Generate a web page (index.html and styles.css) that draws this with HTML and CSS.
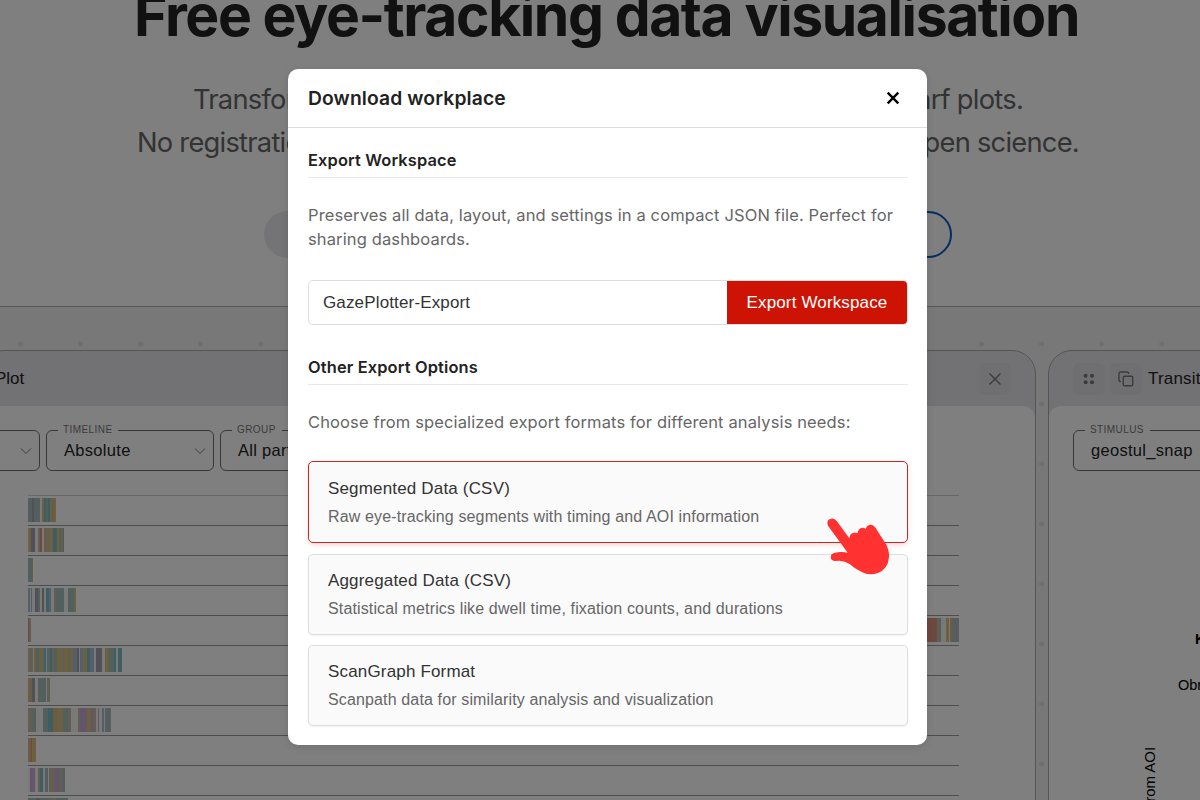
FILE: index.html
```
<!DOCTYPE html>
<html lang="en">
<head>
<meta charset="utf-8">
<title>GazePlotter</title>
<link rel="stylesheet" href="styles.css">
</head>
<body>
<div class="page">
  <header class="hero">
    <h1 class="hero-title">Free eye-tracking data visualisation</h1>
    <div class="hero-line hero-line-first"><span>Transform</span><span>scarf plots.</span></div>
    <div class="hero-line"><span>No registration</span><span>open science.</span></div>
    <div class="hero-actions"><span class="pill"></span><span class="pill pill-outline"></span></div>
  </header>
  <main class="board">
    <section class="panel panel-scarf">
      <div class="panel-head">
        <span class="panel-title">Plot</span>
        <span class="tool"><svg width="14" height="14" viewBox="0 0 14 14"><path d="M1.5 1.5l11 11M12.5 1.5l-11 11"/></svg></span>
      </div>
      <div class="panel-body">
        <div class="selects">
          <fieldset class="select select-cut"><legend class="cap cap-none"></legend><span></span><svg class="chev" width="12" height="8" viewBox="0 0 12 8"><path d="M1 1.5l5 5 5-5"/></svg></fieldset>
          <fieldset class="select"><legend class="cap">TIMELINE</legend><span>Absolute</span><svg class="chev" width="12" height="8" viewBox="0 0 12 8"><path d="M1 1.5l5 5 5-5"/></svg></fieldset>
          <fieldset class="select"><legend class="cap">GROUP</legend><span>All participants</span></fieldset>
        </div>
        <div class="rows" id="rows"></div>
      </div>
    </section>
    <section class="panel panel-matrix">
      <div class="panel-head">
        <span class="tool"><svg width="14" height="14" viewBox="0 0 14 14"><g class="solid"><circle cx="3.6" cy="3.8" r="2"/><circle cx="10" cy="3.8" r="2"/><circle cx="3.6" cy="10.2" r="2"/><circle cx="10" cy="10.2" r="2"/></g></svg></span>
        <span class="tool"><svg width="16" height="16" viewBox="0 0 16 16"><rect x="5.2" y="5.2" width="9.6" height="9.6" rx="1.6"/><path d="M3 10.6H2.4A1.4 1.4 0 0 1 1 9.2V2.6A1.6 1.6 0 0 1 2.6 1h6.6a1.4 1.4 0 0 1 1.4 1.4V3"/></svg></span>
        <span class="panel-title">Transition Matrix</span>
      </div>
      <div class="panel-body">
        <div class="selects"><fieldset class="select select-wide"><legend class="cap">STIMULUS</legend><span>geostul_snap</span></fieldset></div>
        <div class="matrix">
          <span class="axis">From AOI</span>
          <div class="labels"><b>K</b><span>Obr</span></div>
        </div>
      </div>
    </section>
  </main>
</div>
<div class="overlay">
  <div class="modal">
    <div class="modal-head">
      <h2 class="modal-title">Download workplace</h2>
      <svg class="close" width="14" height="14" viewBox="0 0 14 14"><path d="M1.7 1.7l10.6 10.6M12.3 1.7L1.7 12.3"/></svg>
    </div>
    <div class="modal-body">
      <h3 class="section-title">Export Workspace</h3>
      <p class="note">Preserves all data, layout, and settings in a compact JSON file. Perfect for<br>sharing dashboards.</p>
      <div class="export">
        <div class="field">GazePlotter-Export</div>
        <div class="button">Export Workspace</div>
      </div>
      <h3 class="section-title">Other Export Options</h3>
      <p class="note note-short">Choose from specialized export formats for different analysis needs:</p>
      <div class="options">
        <div class="option option-active"><div class="name">Segmented Data (CSV)</div><div class="desc">Raw eye-tracking segments with timing and AOI information</div></div>
        <div class="option"><div class="name">Aggregated Data (CSV)</div><div class="desc">Statistical metrics like dwell time, fixation counts, and durations</div></div>
        <div class="option"><div class="name">ScanGraph Format</div><div class="desc">Scanpath data for similarity analysis and visualization</div></div>
      </div>
    </div>
    <svg class="hand" width="65" height="59" viewBox="78 232 195 177"><path d="M84 258Q78 243 90 238Q102 233 110 244L148 296Q150 280 162 279Q170 278 173 281Q174 268 184 265Q192 263 197 268Q200 256 211 255Q221 255 227 265L258 314Q268 332 267 352Q264 390 232 401Q210 408 190 399Q165 388 150 374Q135 364 118 363L104 364Q92 362 92 352Q93 342 104 339L120 337Q130 336 143 339Z"/></svg>
  </div>
</div>
<script src="rows.js"></script>
</body>
</html>
```

FILE: styles.css
```
* { box-sizing: border-box; }
body { margin: 0; width: 1200px; height: 800px; overflow: hidden; position: relative; background: #fff; font-family: "Liberation Sans", Arial, sans-serif; }
h1, h2, h3, p { margin: 0; }
svg { display: block; flex: none; fill: none; }

.page { height: 800px; overflow: hidden; display: flex; flex-direction: column; }
.hero { height: 306px; flex: none; font-family: Inter, sans-serif; }
.hero-title { margin-top: -20px; padding-left: 134px; height: 75px; line-height: 72px; font-size: 57px; font-weight: 700; letter-spacing: -1.4px; color: #222; white-space: nowrap; }
.hero-line { display: flex; justify-content: space-between; margin: 0 121px 0 137px; line-height: 43px; font-size: 27.3px; letter-spacing: -0.75px; color: #666; }
.hero-line-first { margin: 23px 177px 0 193px; }
.hero-actions { display: flex; justify-content: space-between; margin: 47px 248px 0 264px; }
.pill { width: 180px; height: 47px; border-radius: 24px; background: #e9e9ee; }
.pill-outline { background: #fff; border: 2px solid #0a5ac8; }

.board { flex: 1; display: flex; gap: 12px; padding-top: 43px; background: #f1f1f1 radial-gradient(circle, #dcdcdc 2px, transparent 3px) -9.7px 7px / 60.08px 60px; border-top: 1px solid #b0b0b0; }
.panel { display: flex; flex-direction: column; height: 520px; border: 1px solid #aaa; border-radius: 24px; background: #e4e4e8; overflow: hidden; flex: none; }
.panel-scarf { width: 1056px; margin-left: -20px; }
.panel-matrix { width: 420px; }
.panel-head { display: flex; align-items: center; height: 55px; flex: none; padding-left: 24px; gap: 5px; }
.panel-scarf .panel-head { justify-content: space-between; padding: 0 24px 0 14px; }
.panel-title { font-size: 17px; color: #222; white-space: nowrap; }
.panel-matrix .panel-title { margin-left: 1px; letter-spacing: 0.2px; }
.tool { display: flex; align-items: center; justify-content: center; width: 32px; height: 32px; border-radius: 6px; background: #dfdfe3; stroke: #777; stroke-width: 1.4; }
.solid { fill: #777; stroke: none; }
.panel-body { flex: 1; border-radius: 12px 12px 0 0; background: #fff; padding-top: 19px; }

.selects { display: flex; gap: 6px; margin-left: 7px; }
.panel-matrix .selects { margin-left: 24px; }
.select { display: flex; align-items: center; justify-content: space-between; margin: 0; width: 168px; height: 46px; min-width: 0; padding: 0 7px 4px 17px; border: 1px solid #707070; border-radius: 6px; font-size: 16.5px; letter-spacing: 0.3px; color: #222; white-space: nowrap; }
.select-cut { width: 52px; }
.select-wide { width: 300px; }
.cap { height: 10px; line-height: 10px; padding: 0 6px 0 5px; margin-left: -6px; font-size: 10px; letter-spacing: 0.42px; color: #777; }
.cap-none { padding: 0; }
.chev { stroke: #777; }

.rows { display: flex; flex-direction: column; width: 931px; margin: 24px 0 0 47px; }
.row { height: 30px; flex: none; border-top: 1px solid #9a9a9a; padding-top: 2px; display: flex; }
.row:first-child { border-color: #d0d0d0; }
.bars { display: flex; height: 24px; opacity: 0.72; }
.bars i { display: block; }
.bars-end { margin-left: auto; }

.matrix { display: flex; align-items: flex-start; gap: 20px; margin-left: 92px; color: #000; }
.axis { writing-mode: vertical-rl; transform: rotate(180deg); margin-top: 276px; height: 64px; font-size: 15px; white-space: nowrap; }
.labels { display: flex; flex-direction: column; padding-top: 158px; font-size: 14.5px; line-height: 20px; gap: 26px; }
.labels b { padding-left: 17px; }

.overlay { position: absolute; inset: 0; background: rgba(0, 0, 0, 0.5); padding: 69px 0 0 288.4px; }
.modal { position: relative; width: 639px; height: 676px; border-radius: 10px; background: #fff; box-shadow: 0 2px 8px rgba(0, 0, 0, 0.12); font-family: Inter, sans-serif; }
.modal-head { display: flex; align-items: center; justify-content: space-between; height: 59px; padding: 0 27px 0 19.6px; border-bottom: 1px solid #ddd; }
.modal-title { font-size: 19.3px; font-weight: 600; letter-spacing: 0.12px; color: #222; }
.close { stroke: #000; stroke-width: 2.4; }
.modal-body { padding: 20px 19.4px 0 19.6px; }
.section-title { height: 30px; line-height: 25px; border-bottom: 1px solid #e8e8e8; font-size: 16.4px; font-weight: 600; letter-spacing: 0.15px; color: #222; }
.note { margin-top: 25px; height: 49px; line-height: 24px; font-size: 16.5px; letter-spacing: 0.13px; color: #666; white-space: nowrap; }
.export { display: flex; height: 45px; margin: 28px 0 30px; border: 1px solid #ddd; border-radius: 5px; font-family: "Liberation Sans", Arial, sans-serif; font-size: 17px; letter-spacing: 0.15px; line-height: 43px; white-space: nowrap; }
.field { flex: 1; padding-left: 14px; color: #333; }
.button { width: 180px; text-align: center; border-radius: 0 4px 4px 0; background: #cd1404; color: #fff; }
.note-short { height: 24px; }
.options { display: flex; flex-direction: column; gap: 10px; margin-top: 27px; font-family: "Liberation Sans", Arial, sans-serif; white-space: nowrap; }
.option { height: 81px; padding: 13px 0 0 19px; border: 1px solid #ddd; border-radius: 5px; background: #fafafa; box-shadow: 0 1px 2px rgba(0, 0, 0, 0.06); }
.option-active { height: 82px; margin-bottom: 1px; padding-top: 14px; border-color: #c62828; box-shadow: 0 2px 5px rgba(200, 20, 4, 0.16); }
.name { font-size: 17px; line-height: 26px; letter-spacing: 0.17px; color: #333; }
.desc { margin-top: 2px; font-size: 16px; line-height: 26px; letter-spacing: 0.14px; color: #666; }
.hand { position: absolute; left: 537.6px; top: 448.3px; fill: #ff3131; }
```

FILE: rows.js
```
// Segment colours of the scarf rows; each entry is a colour key and a width in pixels.
const palette = { s: "#8aa0a4", g: "#7fa8a0", t: "#4aa5ad", b: "#85a6c4", y: "#c8a850", o: "#d09a5a", r: "#d0694a", p: "#b48cc8", k: "#7d8190", n: "#a8a48c", w: "#eeeeee" };
const rows = [
  "s4 k2 g2 s4 w2 y2 t2 g2 t2 y1 o2 n1 y2",
  "y3 k4 w3 n2 r2 w2 o2 n3 y3 o1 t4 y2 g2 o2 t1",
  "g4 n1",
  "b2 w1 s1 w3 k3 s2 w2 k2 w2 t3 b2 w3 n2 g8 w4 g6 y2",
  "r1 n2",
  "n5 w1 y2 g3 y3 n2 t2 w1 g3 t2 n2 g3 y5 n2 y4 n2 y3 b4 k2 w1 b3 y4 t3 b4 w2 k6 w3 y4 g5 t2 w2 t4",
  "o3 n1 k3 w3 s2 g6 w1 n3",
  "n5 g3 w7 g5 t5 o5 y5 g5 n3 w7 n2 p7 y4 p2 n3 w2 n1 w3 b2 w1 s2 g4",
  "o3 r1 y4",
  "w2 p5 w3 n2 t3 w2 s3 w1 n4 y1 p5 n3 s3",
  "g8 k4 g10 n6 g12"
];
const draw = (text, cls) => {
  const el = document.createElement("div");
  el.className = cls;
  for (const part of text.split(" ")) {
    const seg = document.createElement("i");
    seg.style.background = palette[part[0]];
    seg.style.width = part.slice(1) + "px";
    el.append(seg);
  }
  return el;
};
rows.forEach((text, i) => {
  const row = document.createElement("div");
  row.className = "row";
  row.append(draw(text, "bars"));
  if (i === 4) row.append(draw("r14 n2 g2 w5 y3 w1 o2 s7", "bars bars-end"));
  document.getElementById("rows").append(row);
});
```
